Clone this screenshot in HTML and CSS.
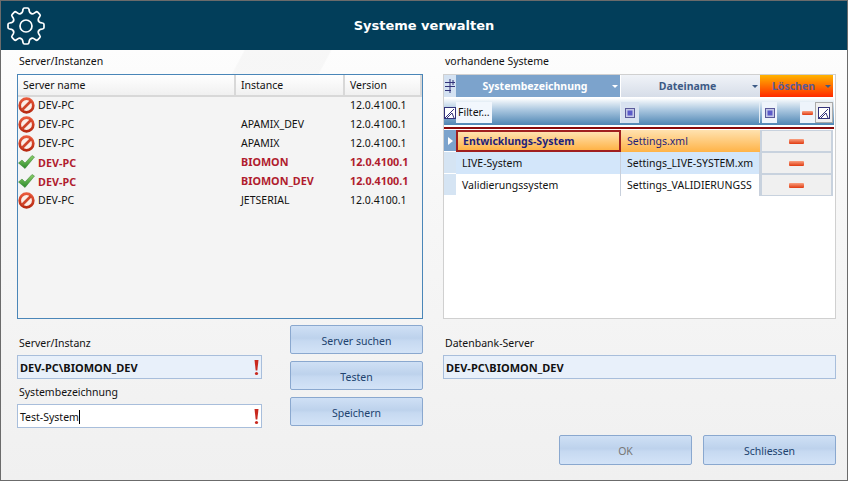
FILE: index.html
```html
<!DOCTYPE html>
<html lang="de">
<head>
    <meta charset="UTF-8">
    <title>Systeme verwalten</title>
    <link rel="stylesheet" href="styles.css">
</head>
<body>
    <svg class="icon-defs" width="0" height="0">
        <defs>
            <linearGradient id="ring-red" x1="0" y1="0" x2="0" y2="1">
                <stop offset="0" stop-color="#e8583a"/>
                <stop offset="1" stop-color="#b82a12"/>
            </linearGradient>
            <linearGradient id="check-green" x1="0" y1="0" x2="0" y2="1">
                <stop offset="0" stop-color="#8ed06a"/>
                <stop offset="1" stop-color="#2c8a2c"/>
            </linearGradient>
            <g id="icon-block">
                <circle cx="8.500" cy="8.500" r="6.800" fill="#fbeee8" stroke="url(#ring-red)" stroke-width="2.700"/>
                <path d="M4 13 13 4" stroke="#d0452a" stroke-width="2.700"/>
            </g>
            <path id="icon-check" d="M0.500 9 4 6 7 9 14 1.500 16.500 3 7 14.500Z" fill="url(#check-green)" stroke="#2f7d28" stroke-width=".5"/>
            <g id="icon-alert">
                <path d="M.5 0h4L3.300 10.500H1.700Z" fill="#c8281e"/>
                <circle cx="2.500" cy="13.500" r="1.600" fill="#c8281e"/>
            </g>
            <g id="icon-filter">
                <rect x=".5" y=".5" width="11" height="11" fill="#fff" stroke="#33337a"/>
                <path d="M1 11 10 2M3 11 8 6 10 11" fill="none" stroke="#33337a"/>
            </g>
            <g id="icon-box">
                <rect x=".5" y=".5" width="9" height="9" fill="#c4c8e8" stroke="#5a5a9a"/>
                <rect x="2.500" y="2.500" width="5" height="5" fill="#5a5ac8"/>
            </g>
            <path id="gear-tooth" d="M-5.200-12.500C-4-13-3.600-13.400-3.400-14.500L-3-16.500Q-2.800-18-1.500-18H1.500Q2.800-18 3-16.500L3.400-14.500C3.600-13.400 4-13 5.200-12.500"/>
        </defs>
    </svg>

    <div class="window">
        <header class="title-bar">
            <svg class="gear" width="40" height="40" viewBox="-20 -20 40 40" fill="none" stroke="#fff" stroke-width="1.7" stroke-linecap="round">
                <use href="#gear-tooth"/>
                <use href="#gear-tooth" transform="rotate(45)"/>
                <use href="#gear-tooth" transform="rotate(90)"/>
                <use href="#gear-tooth" transform="rotate(135)"/>
                <use href="#gear-tooth" transform="rotate(180)"/>
                <use href="#gear-tooth" transform="rotate(225)"/>
                <use href="#gear-tooth" transform="rotate(270)"/>
                <use href="#gear-tooth" transform="rotate(315)"/>
                <circle r="6"/>
            </svg>
            <h1 class="title">Systeme verwalten</h1>
        </header>

        <main class="content">
            <!-- Linke Seite -->
            <section class="column">
                <div class="field-label top-label">Server/Instanzen</div>
                <div class="server-list">
                    <div class="list-row list-head">
                        <div class="head-cell">Server name</div>
                        <div class="head-cell">Instance</div>
                        <div class="head-cell">Version</div>
                    </div>
                    <div class="list-row">
                        <div class="name-cell"><svg width="17" height="17"><use href="#icon-block"/></svg>DEV-PC</div>
                        <div class="list-cell"></div>
                        <div class="list-cell">12.0.4100.1</div>
                    </div>
                    <div class="list-row">
                        <div class="name-cell"><svg width="17" height="17"><use href="#icon-block"/></svg>DEV-PC</div>
                        <div class="list-cell">APAMIX_DEV</div>
                        <div class="list-cell">12.0.4100.1</div>
                    </div>
                    <div class="list-row">
                        <div class="name-cell"><svg width="17" height="17"><use href="#icon-block"/></svg>DEV-PC</div>
                        <div class="list-cell">APAMIX</div>
                        <div class="list-cell">12.0.4100.1</div>
                    </div>
                    <div class="list-row is-active">
                        <div class="name-cell"><svg width="17" height="17"><use href="#icon-check"/></svg>DEV-PC</div>
                        <div class="list-cell">BIOMON</div>
                        <div class="list-cell">12.0.4100.1</div>
                    </div>
                    <div class="list-row is-active">
                        <div class="name-cell"><svg width="17" height="17"><use href="#icon-check"/></svg>DEV-PC</div>
                        <div class="list-cell">BIOMON_DEV</div>
                        <div class="list-cell">12.0.4100.1</div>
                    </div>
                    <div class="list-row">
                        <div class="name-cell"><svg width="17" height="17"><use href="#icon-block"/></svg>DEV-PC</div>
                        <div class="list-cell">JETSERIAL</div>
                        <div class="list-cell">12.0.4100.1</div>
                    </div>
                </div>

                <div class="form-area">
                    <div class="form-fields">
                        <div class="field-label">Server/Instanz</div>
                        <div class="text-box readonly-box">
                            <b>DEV-PC\BIOMON_DEV</b>
                            <svg class="alert" width="5" height="16"><use href="#icon-alert"/></svg>
                        </div>
                        <div class="field-label second-label">Systembezeichnung</div>
                        <div class="text-box">
                            <span class="typed">Test-System</span>
                            <svg class="alert" width="5" height="16"><use href="#icon-alert"/></svg>
                        </div>
                    </div>
                    <div class="form-buttons">
                        <button class="btn">Server suchen</button>
                        <button class="btn">Testen</button>
                        <button class="btn">Speichern</button>
                    </div>
                </div>
            </section>

            <!-- Rechte Seite -->
            <section class="column">
                <div class="field-label top-label">vorhandene Systeme</div>
                <div class="system-grid">
                    <div class="grid-row grid-head">
                        <div class="corner-cell">
                            <svg width="12" height="16" fill="none" stroke="#33337a"><path d="M1 4.500h10M1 8.500h10M1 12.500h6M6 1v14M9 2v5"/></svg>
                        </div>
                        <div class="col-head col-sorted">Systembezeichnung<i class="arrow"></i></div>
                        <div class="col-head">Dateiname<i class="arrow"></i></div>
                        <div class="col-head col-delete">Löschen<i class="arrow"></i></div>
                    </div>
                    <div class="grid-row filter-row">
                        <div class="filter-icon"><svg width="12" height="12"><use href="#icon-filter"/></svg></div>
                        <div class="filter-cell">
                            <span class="filter-input">Filter...</span>
                        </div>
                        <div class="filter-cell">
                            <span class="box-chip"><svg width="10" height="10"><use href="#icon-box"/></svg></span>
                        </div>
                        <div class="filter-cell filter-last">
                            <span class="box-chip box-wide"><svg width="10" height="10"><use href="#icon-box"/></svg></span>
                            <span class="dash-chip"><i class="dash dash-small"></i></span>
                            <span class="filter-clear"><svg width="12" height="12"><use href="#icon-filter"/></svg></span>
                        </div>
                    </div>
                    <div class="filter-rule"></div>
                    <div class="grid-row data-row row-selected">
                        <div class="row-marker"><i class="marker-arrow"></i></div>
                        <div class="data-cell cell-focus">Entwicklungs-System</div>
                        <div class="data-cell">Settings.xml</div>
                        <div class="delete-cell"><i class="dash"></i></div>
                    </div>
                    <div class="grid-row data-row row-alt">
                        <div class="row-marker"></div>
                        <div class="data-cell">LIVE-System</div>
                        <div class="data-cell">Settings_LIVE-SYSTEM.xm</div>
                        <div class="delete-cell"><i class="dash"></i></div>
                    </div>
                    <div class="grid-row data-row">
                        <div class="row-marker"></div>
                        <div class="data-cell">Validierungssystem</div>
                        <div class="data-cell">Settings_VALIDIERUNGSS</div>
                        <div class="delete-cell"><i class="dash"></i></div>
                    </div>
                </div>

                <div class="db-area">
                    <div class="field-label">Datenbank-Server</div>
                    <div class="text-box readonly-box"><b>DEV-PC\BIOMON_DEV</b></div>
                </div>

                <div class="dialog-buttons">
                    <button class="btn btn-disabled">OK</button>
                    <button class="btn">Schliessen</button>
                </div>
            </section>
        </main>
    </div>
</body>
</html>
```

FILE: styles.css
```css
* {
    margin: 0;
    padding: 0;
    box-sizing: border-box;
}

body {
    width: 848px;
    height: 481px;
    overflow: hidden;
    font-family: "Noto Sans", "DejaVu Sans", sans-serif;
    font-size: 10.5px;
    color: #111;
}

.icon-defs {
    position: absolute;
}

.window {
    width: 848px;
    height: 481px;
    border: 1px solid #6b6b6b;
    display: flex;
    flex-direction: column;
    background:
        linear-gradient(118deg, transparent 0 28%, rgba(243, 243, 243, 0.6) 28.2% 38%, transparent 38.2%) 0 49px / 100% 40px no-repeat,
        linear-gradient(180deg, #fff 0, #f7f7f7 40%, #f0f0f0 100%);
}

/* Titelleiste */
.title-bar {
    height: 49px;
    background: #023e5a;
    display: flex;
    align-items: center;
    position: relative;
    flex: none;
}

.gear {
    margin-left: 5px;
}

.title {
    position: absolute;
    left: 0;
    right: 0;
    text-align: center;
    color: #fff;
    font-family: "DejaVu Sans", sans-serif;
    font-size: 13px;
    font-weight: 700;
}

.content {
    flex: 1;
    display: grid;
    grid-template-columns: 406px 393px;
    column-gap: 20px;
    padding-left: 16px;
}

.column {
    display: flex;
    flex-direction: column;
}

.field-label {
    height: 13px;
    line-height: 13px;
    padding-left: 2px;
}

.top-label {
    margin-top: 5px;
    margin-bottom: 6px;
}

/* Serverliste */
.server-list {
    height: 245px;
    border: 1px solid #4a86b8;
    background: #f4f4f4;
    flex: none;
}

.list-row {
    display: grid;
    grid-template-columns: 218px 109px 77px;
    height: 19px;
    line-height: 19px;
}

.list-head {
    height: 21px;
    line-height: 20px;
}

.head-cell {
    padding-left: 5px;
    background: linear-gradient(180deg, #fff, #f0f0f0);
    border-right: 2px solid #d8d8d8;
    border-bottom: 2px solid #d8d8d8;
}

.name-cell {
    display: flex;
    align-items: center;
    gap: 3px;
}

.list-cell {
    padding-left: 5px;
}

.is-active {
    color: #b01c2e;
    font-weight: 700;
    font-size: 10.8px;
    line-height: 18px;
}

/* Formular */
.form-area {
    display: flex;
    justify-content: space-between;
    margin-top: 6px;
}

.form-fields {
    width: 245px;
    padding-top: 12px;
}

.form-fields .field-label {
    margin-bottom: 5px;
}

.form-fields .second-label {
    margin-top: 7px;
    margin-bottom: 5px;
}

.text-box {
    height: 24px;
    border: 1px solid #a8bedb;
    background: #fff;
    display: flex;
    align-items: center;
    justify-content: space-between;
    padding: 1px 1px 0 2px;
}

.text-box b {
    font-size: 11px;
}

.readonly-box {
    background: #e8f0fa;
}

.typed {
    border-right: 1px solid #000;
    line-height: 14px;
}

.alert {
    margin-right: 1px;
}

/* Buttons */
.form-buttons {
    display: flex;
    flex-direction: column;
    gap: 7px;
    width: 133px;
}

.btn {
    height: 29px;
    padding-top: 2px;
    border: 1px solid #8aa8cf;
    border-radius: 2px;
    background: linear-gradient(180deg, #cfe0f5 0, #bdd2ec 45%, #c6d9f1 55%, #d3e3f7 100%);
    color: #20426e;
    font-family: inherit;
    font-size: 10.5px;
}

.btn-disabled {
    color: #777;
}

/* Systemtabelle */
.system-grid {
    height: 245px;
    border: 1px solid #d0d0d0;
    background: #fff;
    padding-right: 1px;
    flex: none;
}

.grid-row {
    display: grid;
    grid-template-columns: 12px 165px 139px 73px;
}

.grid-head {
    height: 22px;
    line-height: 22px;
    font-weight: 700;
}

.corner-cell {
    background: #d4e2f2;
    display: flex;
    align-items: center;
}

.col-head {
    position: relative;
    text-align: center;
    padding-right: 6px;
    color: #3d5a85;
    background: linear-gradient(180deg, #f0f3f8, #d6dde8);
}

.col-sorted {
    color: #fff;
    background: #7ca3cc;
    border-right: 1px solid #fff;
}

.col-delete {
    color: #5c5a94;
    background: linear-gradient(180deg, #ffb400, #ff2a00);
}

.arrow {
    position: absolute;
    right: 2px;
    top: 10px;
    border: 3px solid transparent;
    border-top: 3px solid #3d5a85;
    border-bottom: 0;
}

.col-sorted .arrow {
    border-top-color: #fff;
}

.filter-row {
    height: 27px;
    margin-top: 1px;
    background: linear-gradient(180deg, #fff 0, #a9c6df 45%, #4f86b4 100%);
}

.filter-icon {
    display: flex;
    align-items: center;
    height: 21px;
    margin-top: 4px;
}

.filter-cell {
    display: flex;
    align-items: flex-start;
    height: 21px;
    margin-top: 4px;
    border-right: 1px solid #e4edf5;
}

.filter-input {
    width: 36px;
    height: 21px;
    line-height: 21px;
    background: #f2f7fd;
    padding-left: 2px;
    white-space: nowrap;
}

.box-chip {
    width: 18px;
    height: 21px;
    display: flex;
    align-items: center;
    justify-content: center;
    background: #d8e2f0;
}

.filter-last {
    border-right: 0;
    padding-left: 2px;
}

.box-wide {
    width: 15px;
    background: #eef4fb;
}

.dash-chip {
    width: 15px;
    height: 21px;
    margin-left: 23px;
    background: #eef4fb;
    display: flex;
    align-items: center;
    justify-content: center;
}

.filter-clear {
    width: 18px;
    height: 21px;
    background: #f0f0f0;
    border: 1px solid #aaa;
    display: flex;
    align-items: center;
    justify-content: center;
}

.filter-rule {
    height: 2px;
    margin: 2px 0 1px;
    background: #8b0a0a;
}

.data-row {
    height: 22px;
    line-height: 22px;
}

.row-marker {
    background: #d5e4f3;
    border-bottom: 1px solid #fff;
    display: flex;
    align-items: center;
}

.row-selected .row-marker {
    background: #7ca3cc;
}

.marker-arrow {
    margin-left: 4px;
    border: 4px solid transparent;
    border-left: 5px solid #fff;
    border-right: 0;
}

.data-cell {
    padding-left: 6px;
    white-space: nowrap;
    border-right: 1px solid #c8d0dc;
}

.row-selected .data-cell {
    background: linear-gradient(180deg, #ffe2b0, #ffb347);
    color: #1f1f7a;
    border-right: 0;
}

.row-selected .cell-focus {
    border: 2px solid #a01f1f;
    line-height: 18px;
    padding-left: 5px;
    font-weight: 700;
}

.row-alt .data-cell {
    background: #d3e6fa;
}

.delete-cell {
    background: #f0f0f0;
    border: 2px solid #c8d2de;
    border-top-width: 1px;
    border-bottom-width: 1px;
    display: flex;
    align-items: center;
    justify-content: center;
}

.dash {
    width: 15px;
    height: 5px;
    border-radius: 1px;
    background: linear-gradient(180deg, #f9a080, #e03a10);
}

.dash-small {
    width: 11px;
    height: 4px;
}

.db-area {
    margin-top: 18px;
}

.db-area .field-label {
    margin-bottom: 5px;
}

.dialog-buttons {
    display: flex;
    justify-content: flex-end;
    gap: 11px;
    margin-top: 56px;
}

.dialog-buttons .btn {
    width: 133px;
    height: 30px;
    padding-top: 1px;
}
```
